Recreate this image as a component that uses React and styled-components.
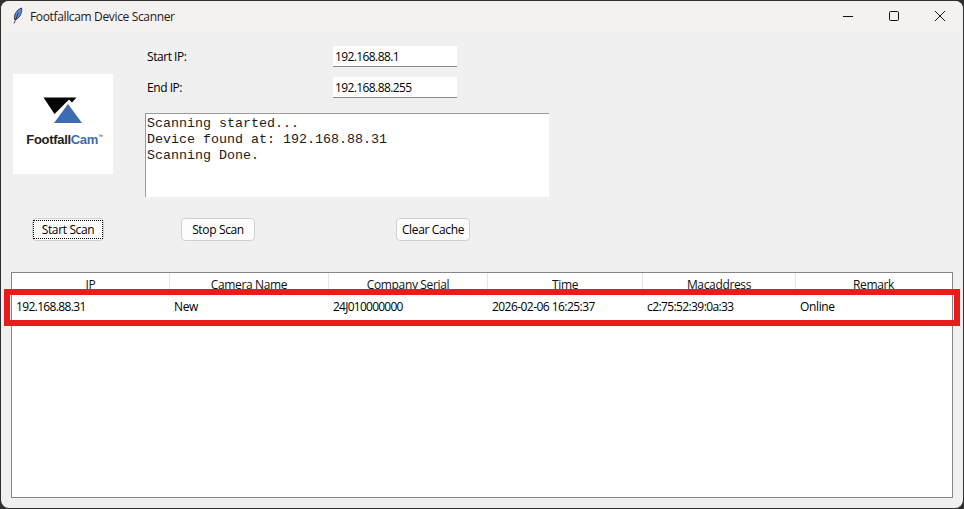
import styled, { createGlobalStyle } from "styled-components";

const columns = [
  { title: "IP", width: 158, value: "192.168.88.31", spacing: -0.65 },
  { title: "Camera Name", width: 159, value: "New", spacing: -0.35 },
  { title: "Company Serial", width: 159, value: "24J010000000", spacing: -0.75 },
  { title: "Time", width: 155, value: "2026-02-06 16:25:37", spacing: -0.55 },
  { title: "Macaddress", width: 153, value: "c2:75:52:39:0a:33", spacing: -0.6 },
  { title: "Remark", width: 155, value: "Online", spacing: -0.35 },
];

const GlobalStyle = createGlobalStyle`
  html, body {
    margin: 0;
    padding: 0;
    background: #2f2f2f;
  }
  * {
    box-sizing: border-box;
  }
`;

function FeatherIcon() {
  return (
    <svg width="12" height="18" viewBox="0 0 12 18">
      <path d="M2.6 12.5 C1.6 8 4.5 2.6 9.6 1 C10.2 5 8.6 10.2 4.2 12.4 Z" fill="#5a8fdf" stroke="#1a2230" strokeWidth="0.8" />
      <path d="M2 16.5 L6.5 5.5" stroke="#1a2230" strokeWidth="0.8" fill="none" />
    </svg>
  );
}

function LogoMark() {
  return (
    <svg width="40" height="27" viewBox="0 0 40 27">
      <polygon points="0.5,0.5 33.5,0.5 29,5.5 26,2.5 11.5,17" fill="#050505" />
      <polygon points="25,7 11,26 39,26" fill="#3d6cb3" />
    </svg>
  );
}

export default function App() {
  return (
    <>
      <GlobalStyle />
      <Screen>
        <Window>
          <TitleBar>
            <AppIcon>
              <FeatherIcon />
            </AppIcon>
            <WindowTitle>Footfallcam Device Scanner</WindowTitle>
            <WindowControls>
              <ControlButton>
                <svg width="16" height="16" viewBox="0 0 16 16">
                  <path d="M3 8.5H13" stroke="#111" strokeWidth="1" />
                </svg>
              </ControlButton>
              <ControlButton>
                <svg width="16" height="16" viewBox="0 0 16 16">
                  <rect x="3.5" y="3.5" width="9" height="9" rx="1.2" fill="none" stroke="#111" strokeWidth="1" />
                </svg>
              </ControlButton>
              <ControlButton>
                <svg width="16" height="16" viewBox="0 0 16 16">
                  <path d="M3 3L13 13M13 3L3 13" stroke="#111" strokeWidth="1" />
                </svg>
              </ControlButton>
            </WindowControls>
          </TitleBar>

          <Body>
            <TopPanel>
              <LogoCard>
                <LogoMark />
                <LogoText>
                  Footfall<LogoAccent>Cam</LogoAccent>
                  <LogoTm>™</LogoTm>
                </LogoText>
              </LogoCard>
              <FormColumn>
                <FieldRow>
                  <FieldLabel>Start IP:</FieldLabel>
                  <FieldInput readOnly value="192.168.88.1" />
                </FieldRow>
                <FieldRow>
                  <FieldLabel>End IP:</FieldLabel>
                  <FieldInput readOnly value="192.168.88.255" />
                </FieldRow>
                <LogBox>
                  <div>Scanning started...</div>
                  <div>Device found at: 192.168.88.31</div>
                  <div>Scanning Done.</div>
                </LogBox>
              </FormColumn>
            </TopPanel>

            <ButtonRow>
              <ActionButton $width={72} $focused>
                <span>Start Scan</span>
              </ActionButton>
              <ActionButton $width={74} $offset={77}>
                <span>Stop Scan</span>
              </ActionButton>
              <ActionButton $width={74} $offset={141}>
                <span>Clear Cache</span>
              </ActionButton>
            </ButtonRow>

            <TableFrame>
              <HeaderRow>
                {columns.map((col) => (
                  <HeaderCell key={col.title} $width={col.width}>
                    {col.title}
                  </HeaderCell>
                ))}
              </HeaderRow>
              <DataRow>
                {columns.map((col) => (
                  <DataCell key={col.title} $width={col.width} $spacing={col.spacing}>
                    {col.value}
                  </DataCell>
                ))}
              </DataRow>
              <Highlight />
            </TableFrame>
          </Body>
        </Window>
      </Screen>
    </>
  );
}

const Screen = styled.div`
  width: 964px;
  height: 509px;
  background: #2f2f2f;
  overflow: hidden;
`;

const Window = styled.div`
  width: 962px;
  height: 507px;
  margin: 1px;
  border-radius: 8px;
  overflow: hidden;
  background: #f0f0f0;
  display: flex;
  flex-direction: column;
  font-family: "Open Sans", "Noto Sans", sans-serif;
  font-size: 12px;
  letter-spacing: -0.35px;
  color: #000;
`;

const TitleBar = styled.div`
  height: 30px;
  flex-shrink: 0;
  display: flex;
  align-items: center;
  background: #f6f1f1;
  padding-left: 11px;
`;

const AppIcon = styled.div`
  width: 18px;
  height: 18px;
  display: flex;
  align-items: center;
`;

const WindowTitle = styled.div`
  flex: 1;
  font-size: 12px;
  color: #1a1a1a;
`;

const WindowControls = styled.div`
  display: flex;
  height: 100%;
`;

const ControlButton = styled.div`
  width: 46px;
  height: 100%;
  display: flex;
  align-items: center;
  justify-content: center;
`;

const Body = styled.div`
  flex: 1;
  display: flex;
  flex-direction: column;
`;

const TopPanel = styled.div`
  display: flex;
  padding: 15px 0 0 12px;
`;

const LogoCard = styled.div`
  width: 100px;
  height: 100px;
  margin: 28px 32px 0 0;
  background: #fff;
  display: flex;
  flex-direction: column;
  align-items: center;
  padding-top: 23px;
`;

const LogoText = styled.div`
  font-family: "Liberation Sans", Arial, sans-serif;
  font-weight: 700;
  font-size: 13px;
  letter-spacing: -0.3px;
  line-height: 15px;
  margin-top: 5px;
  padding-left: 3px;
  color: #222;
`;

const LogoAccent = styled.span`
  color: #3d6cb3;
`;

const LogoTm = styled.span`
  font-size: 5px;
  font-weight: 400;
  vertical-align: 6px;
  color: #333;
`;

const FormColumn = styled.div`
  display: flex;
  flex-direction: column;
`;

const FieldRow = styled.div`
  display: flex;
  align-items: center;
  height: 21px;
  margin-bottom: 10px;
`;

const FieldLabel = styled.div`
  width: 188px;
  padding-left: 2px;
  letter-spacing: -0.45px;
`;

const FieldInput = styled.input`
  width: 124px;
  height: 21px;
  border: none;
  border-bottom: 1px solid #8a8a8a;
  background: #fff;
  padding: 0 2px;
  font: inherit;
  letter-spacing: -0.6px;
  color: #000;
  outline: none;
`;

const LogBox = styled.div`
  width: 404px;
  height: 84px;
  margin-top: 5px;
  background: #fff;
  border-top: 1px solid #9a9a9a;
  border-left: 1px solid #9a9a9a;
  padding: 2px 1px;
  font-family: "Liberation Mono", "Courier New", monospace;
  font-size: 13.33px;
  letter-spacing: 0;
  line-height: 16px;
  white-space: pre;
  color: #1c1c1c;
`;

const ButtonRow = styled.div`
  display: flex;
  padding: 21px 0 0 31px;
`;

const ActionButton = styled.div`
  width: ${(p) => p.$width}px;
  height: 23px;
  margin-left: ${(p) => p.$offset || 0}px;
  border: 1px solid #d0d0d0;
  border-radius: 4px;
  background: #fdfdfd;
  padding: 1px 0;
  display: flex;
  white-space: nowrap;

  span {
    flex: 1;
    display: flex;
    align-items: center;
    justify-content: center;
    border: 1px ${(p) => (p.$focused ? "dotted #000" : "solid transparent")};
  }
`;

const TableFrame = styled.div`
  position: relative;
  width: 942px;
  height: 226px;
  margin: 31px 0 0 10px;
  background: #fff;
  border: 1px solid #85868c;
`;

const HeaderRow = styled.div`
  display: flex;
  height: 23px;
`;

const HeaderCell = styled.div`
  width: ${(p) => p.$width}px;
  flex-shrink: 0;
  text-align: center;
  line-height: 24px;
  border-right: 1px solid #e5e5e5;
  color: #111;

  &:last-child {
    border-right: none;
  }
`;

const DataRow = styled.div`
  display: flex;
  height: 22px;
`;

const DataCell = styled.div`
  width: ${(p) => p.$width}px;
  flex-shrink: 0;
  padding-left: 4px;
  line-height: 22px;
  white-space: nowrap;
  letter-spacing: ${(p) => p.$spacing}px;
`;

const Highlight = styled.div`
  position: absolute;
  left: -8px;
  top: 16px;
  width: 956px;
  height: 37px;
  border: 6px solid #e81c1c;
`;
